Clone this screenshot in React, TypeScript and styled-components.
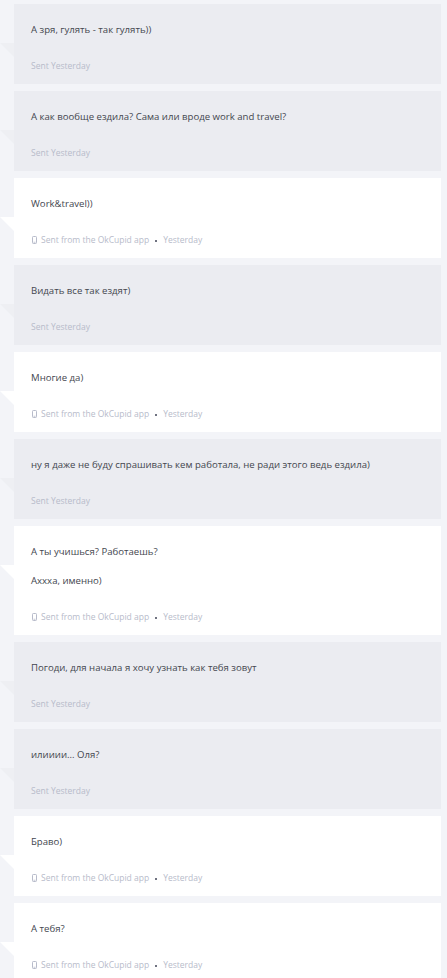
import React from "react";
import styled, { createGlobalStyle } from "styled-components";

const GlobalStyle = createGlobalStyle`
  html, body {
    margin: 0;
    padding: 0;
    background: #f3f4f8;
  }
  body {
    font-family: "Open Sans", "Liberation Sans", sans-serif;
  }
`;

const Thread = styled.div`
  display: flex;
  flex-direction: column;
  gap: 7px;
  padding: 4px 6px 0 14px;
`;

const Bubble = styled.div<{ $mine: boolean }>`
  position: relative;
  display: flex;
  flex-direction: column;
  background: ${(p) => (p.$mine ? "#ffffff" : "#ebecf1")};
  padding: 19px 17px 11px;
  &::before {
    content: "";
    position: absolute;
    left: -14px;
    top: 39px;
    width: 14px;
    height: 14px;
    background: ${(p) => (p.$mine ? "#ffffff" : "#eeeff3")};
    clip-path: polygon(0 0, 100% 0, 100% 100%);
  }
`;

const Text = styled.p`
  margin: 0 0 14px;
  font-size: 9.6px;
  line-height: 14px;
  color: #44474f;
  & + & {
    margin-top: 1px;
  }
`;

const Meta = styled.div`
  margin-top: 8px;
  display: flex;
  align-items: center;
  font-size: 8.5px;
  line-height: 14px;
  color: #b7bbca;
`;

const Dot = styled.span`
  width: 2px;
  height: 2px;
  background: #6f7280;
  margin: 1px 6px 0 6px;
`;

const PhoneIcon = () => (
  <svg width="5" height="8" viewBox="0 0 5 8" style={{ marginRight: 4, marginLeft: 1 }}>
    <rect x="0.5" y="0.5" width="4" height="7" rx="0.8" fill="none" stroke="#b7bbca" strokeWidth="1" />
    <rect x="1.5" y="5.8" width="2" height="0.8" fill="#b7bbca" />
  </svg>
);

interface Message {
  lines: string[];
  mine: boolean;
}

const messages: Message[] = [
  { lines: ["А зря, гулять - так гулять))"], mine: false },
  { lines: ["А как вообще ездила? Сама или вроде work and travel?"], mine: false },
  { lines: ["Work&travel))"], mine: true },
  { lines: ["Видать все так ездят)"], mine: false },
  { lines: ["Многие да)"], mine: true },
  { lines: ["ну я даже не буду спрашивать кем работала, не ради этого ведь ездила)"], mine: false },
  { lines: ["А ты учишься? Работаешь?", "Ахххa, именно)"], mine: true },
  { lines: ["Погоди, для начала я хочу узнать как тебя зовут"], mine: false },
  { lines: ["илииии... Оля?"], mine: false },
  { lines: ["Браво)"], mine: true },
  { lines: ["А тебя?"], mine: true },
];

export default function App() {
  return (
    <>
      <GlobalStyle />
      <Thread>
        {messages.map((m, i) => (
          <Bubble key={i} $mine={m.mine}>
            {m.lines.map((l, j) => (
              <Text key={j}>{l}</Text>
            ))}
            {m.mine ? (
              <Meta>
                <PhoneIcon />
                Sent from the OkCupid app
                <Dot />
                Yesterday
              </Meta>
            ) : (
              <Meta>Sent Yesterday</Meta>
            )}
          </Bubble>
        ))}
      </Thread>
    </>
  );
}
